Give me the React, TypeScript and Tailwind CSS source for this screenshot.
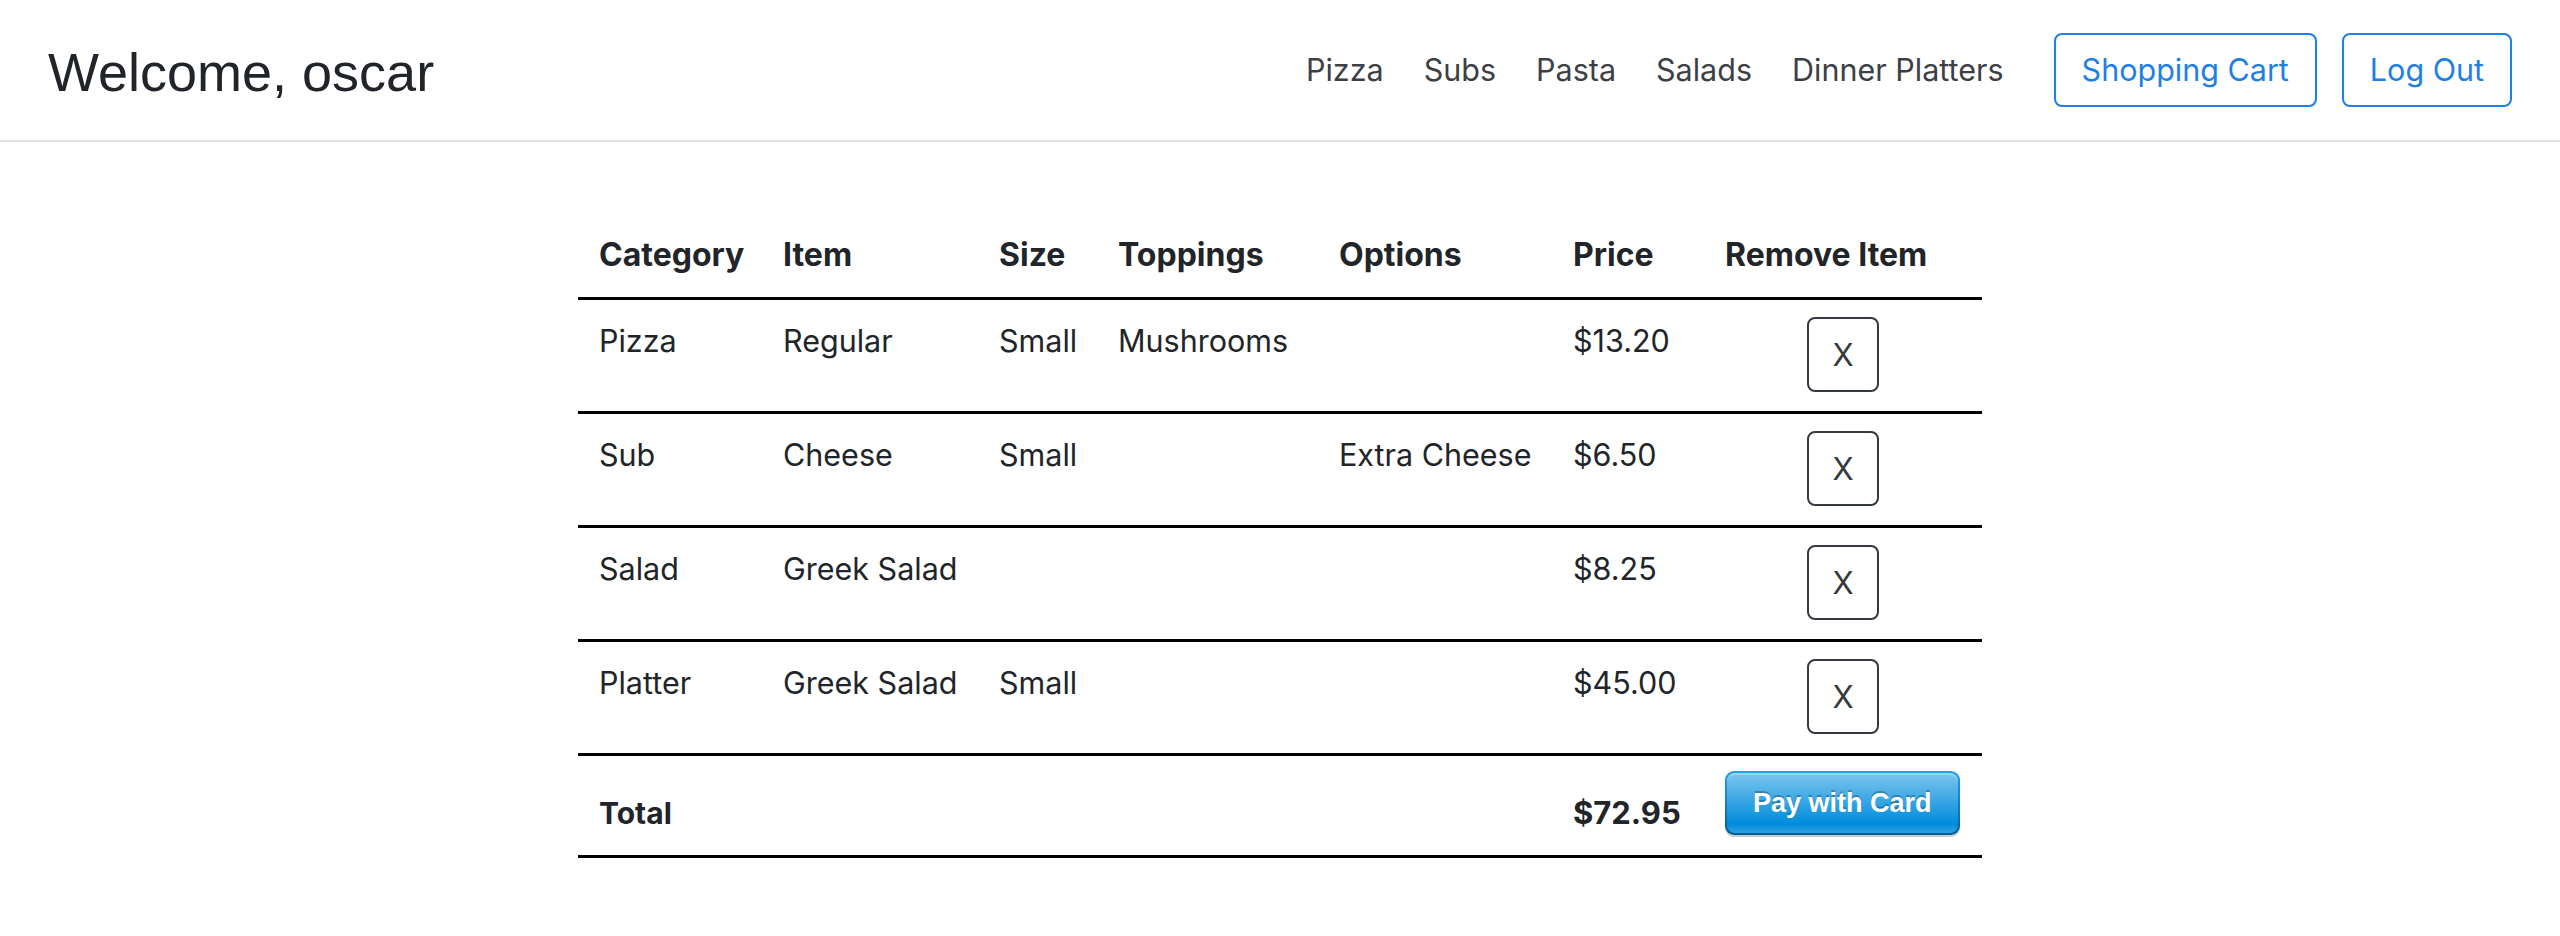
import { useState } from 'react';

type CartItem = {
  category: string;
  item: string;
  size: string;
  toppings: string;
  options: string;
  price: number;
};

const initialItems: CartItem[] = [
  { category: 'Pizza', item: 'Regular', size: 'Small', toppings: 'Mushrooms', options: '', price: 13.2 },
  { category: 'Sub', item: 'Cheese', size: 'Small', toppings: '', options: 'Extra Cheese', price: 6.5 },
  { category: 'Salad', item: 'Greek Salad', size: '', toppings: '', options: '', price: 8.25 },
  { category: 'Platter', item: 'Greek Salad', size: 'Small', toppings: '', options: '', price: 45.0 },
];

const navLinks = ['Pizza', 'Subs', 'Pasta', 'Salads', 'Dinner Platters'];

const Header = () => {
  return (
    <header className="flex h-[142px] items-center justify-between border-b-2 border-[#dee2e6] pl-[48px] pr-[48px]">
      <h1 className="pt-[4px] font-['Liberation_Sans',Arial,sans-serif] text-[54px] leading-none text-[#212529]">
        Welcome, oscar
      </h1>
      <div className="flex items-center font-['Inter',sans-serif]">
        <nav className="flex gap-[40px] text-[30.5px] text-[#3c4045]">
          {navLinks.map((link) => (
            <a key={link} href="#" className="leading-[46px]">
              {link}
            </a>
          ))}
        </nav>
        <button className="ml-[50px] h-[74px] rounded-[8px] border-2 border-[#1e7fe6] px-[26px] text-[30.5px] text-[#1e7fe6]">
          Shopping Cart
        </button>
        <button className="ml-[25px] h-[74px] rounded-[8px] border-2 border-[#1e7fe6] px-[26px] text-[30.5px] text-[#1e7fe6]">
          Log Out
        </button>
      </div>
    </header>
  );
};

function App() {
  const [items, setItems] = useState(initialItems);

  const removeItem = (i: number) => {
    const next = items.slice();
    next.splice(i, 1);
    setItems(next);
  };

  const total = items.reduce((sum, it) => sum + it.price, 0);

  return (
    <div className="min-h-screen bg-white">
      <Header />
      <div className="flex justify-center pt-[71px]">
        <table className="w-[1404px] table-fixed whitespace-nowrap font-['Inter',sans-serif] text-[#212529]">
          <thead>
            <tr className="border-b-[3px] border-black text-left text-[32px] font-bold leading-[48px]">
              <th className="w-[184px] px-[21px] py-[18px]">Category</th>
              <th className="w-[216px] px-[21px] py-[18px]">Item</th>
              <th className="w-[119px] px-[21px] py-[18px]">Size</th>
              <th className="w-[221px] px-[21px] py-[18px]">Toppings</th>
              <th className="w-[234px] px-[21px] py-[18px]">Options</th>
              <th className="w-[152px] px-[21px] py-[18px]">Price</th>
              <th className="w-[278px] px-[21px] py-[18px]">Remove Item</th>
            </tr>
          </thead>
          <tbody className="text-[30.5px] leading-[44px]">
            {items.map((it, i) => (
              <tr key={i} className="border-b-[3px] border-black align-top">
                <td className="px-[21px] pt-[19px]">{it.category}</td>
                <td className="px-[21px] pt-[19px]">{it.item}</td>
                <td className="px-[21px] pt-[19px]">{it.size}</td>
                <td className="px-[21px] pt-[19px]">{it.toppings}</td>
                <td className="px-[21px] pt-[19px]">{it.options}</td>
                <td className="px-[21px] pt-[19px]">${it.price.toFixed(2)}</td>
                <td className="px-[21px] pt-[17px] pb-[19px] text-center">
                  <button
                    onClick={() => removeItem(i)}
                    className="h-[75px] w-[72px] rounded-[8px] border-2 border-[#343a40] text-[31px] text-[#343a40]"
                  >
                    X
                  </button>
                </td>
              </tr>
            ))}
            <tr className="border-b-[3px] border-black align-top">
              <td className="px-[21px] pt-[35px] pb-[19px] text-[30px] font-bold">Total</td>
              <td />
              <td />
              <td />
              <td />
              <td className="px-[21px] pt-[35px] pb-[19px] text-[31px] font-bold">${total.toFixed(2)}</td>
              <td className="px-[21px] pt-[15px] pb-[20px]">
                <button className="block rounded-[9px] bg-[linear-gradient(#28a0e5,#015e94)] p-[2px] shadow-[0_2px_0_rgba(0,0,0,0.2)]">
                  <span className="block h-[60px] rounded-[8px] bg-[linear-gradient(#7dc5ee,#008cdd_85%,#30a2e4)] px-[26px] font-['Liberation_Sans',Arial,sans-serif] text-[27px] font-bold leading-[60px] text-white shadow-[inset_0_2px_0_rgba(255,255,255,0.25)] [text-shadow:0_-2px_0_rgba(0,0,0,0.25)]">
                    Pay with Card
                  </span>
                </button>
              </td>
            </tr>
          </tbody>
        </table>
      </div>
    </div>
  );
}

export default App;
